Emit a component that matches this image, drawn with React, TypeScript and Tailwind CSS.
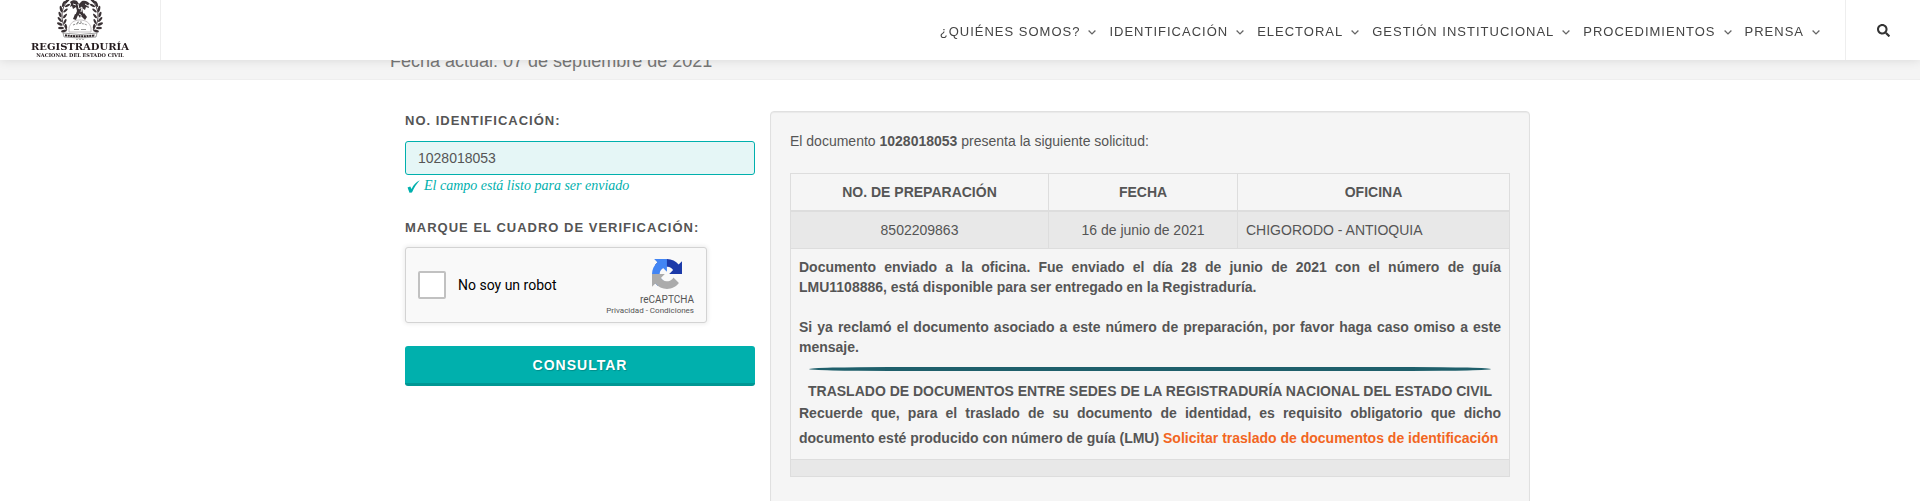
import React from "react";
import { FaSearch } from "react-icons/fa";

const menu = [
  "¿Quiénes somos?",
  "Identificación",
  "Electoral",
  "Gestión institucional",
  "Procedimientos",
  "Prensa",
];

function Chevron() {
  return (
    <svg width="8" height="5" viewBox="0 0 8 5" fill="none" stroke="#666" strokeWidth="1.3" aria-hidden="true">
      <path d="M0.6 0.5 4 3.9 7.4 0.5" />
    </svg>
  );
}

function Laurel() {
  return (
    <g>
      <path d="M12 0C7 4 5 10 5 15c0 6 1 10 5 15" fill="none" stroke="#4a4044" strokeWidth="1" />
      <g fill="#3a3235">
        <ellipse cx="10" cy="1" rx="3.4" ry="1.2" transform="rotate(-40 10 1)" />
        <ellipse cx="6.5" cy="4" rx="3.2" ry="1.2" transform="rotate(-70 6.5 4)" />
        <ellipse cx="10.500" cy="5.500" rx="2.800" ry="1.1" transform="rotate(-25 10.500 5.500)" />
        <ellipse cx="4" cy="9" rx="3.2" ry="1.2" transform="rotate(-100 4 9)" />
        <ellipse cx="8.500" cy="10.500" rx="2.800" ry="1.1" transform="rotate(-40 8.500 10.500)" />
        <ellipse cx="3" cy="14.500" rx="3" ry="1.2" transform="rotate(70 3 14.500)" />
        <ellipse cx="8" cy="16" rx="2.800" ry="1.1" transform="rotate(-50 8 16)" />
        <ellipse cx="2.800" cy="19.500" rx="3" ry="1.2" transform="rotate(50 2.800 19.500)" />
        <ellipse cx="8" cy="21.500" rx="2.800" ry="1.1" transform="rotate(-65 8 21.500)" />
        <ellipse cx="2.800" cy="24" rx="3" ry="1.3" transform="rotate(25 2.800 24)" />
        <ellipse cx="9" cy="26.500" rx="2.800" ry="1.1" transform="rotate(80 9 26.500)" />
        <ellipse cx="4" cy="28" rx="3" ry="1.3" transform="rotate(0 4 28)" />
        <ellipse cx="7" cy="31" rx="3" ry="1.2" transform="rotate(-15 7 31)" />
      </g>
    </g>
  );
}

function Emblem() {
  return (
    <svg width="46" height="41" viewBox="0 0 46 41" aria-hidden="true">
      <Laurel />
      <g transform="translate(46 0) scale(-1 1)">
        <Laurel />
      </g>
      <g fill="#3a3235">
        <path d="M13 2c2-2 5-2 7-1l2 3 3-3c4-1 6 1 8 3l-2 1 1 3-3-1-1 3-3-2 1 5 1 3-3-1-1 3-2-3-3 1 2-5-1-4-3 2-1-3-2 1 1-3z" />
        <path d="M18 14l3 1-2 5-3-1zM27 13l3 4-2 3-4-4z" />
      </g>
      <path d="M21 4l1 5 3-2-1 5M16 4l3 1M28 4l3 2M22 14l2 1" fill="none" stroke="#fff" strokeWidth="0.9" />
      <path d="M12 28c1-5 5-8 11-8s10 3 11 8v4H12z" fill="#fff" stroke="#b5b0b2" strokeWidth="0.8" />
      <path d="M16 25q7-3 14 0M20 22.500q3-1 6 0" fill="none" stroke="#888" strokeWidth="1" strokeDasharray="2 1" />
      <path d="M17 29.500h5M24 29.500h5" stroke="#999" strokeWidth="1" />
      <path d="M6 33q17 3 34 0l-1 4q-16 2-32 0z" fill="#fff" stroke="#777" strokeWidth="0.7" />
      <path d="M8 35.300q15 2 30 0" fill="none" stroke="#2b2326" strokeWidth="2" strokeDasharray="2 0.700" />
      <path d="M19 39.500h8" stroke="#bbb" strokeWidth="1" strokeDasharray="2 1" />
    </svg>
  );
}

function RecaptchaLogo() {
  return (
    <svg width="30" height="30" viewBox="0 0 64 64" aria-hidden="true">
      <path fill="#1c3aa9" d="M64 31.955l-.033-1.370V4.687l-7.160 7.160C50.948 4.674 42.033.093 32.050.093c-10.389 0-19.622 4.960-25.458 12.640l11.736 11.860a15.550 15.550 0 0 1 4.754-5.334c2.050-1.600 4.952-2.906 8.968-2.906.485 0 .860.057 1.135.163 4.976.393 9.288 3.140 11.828 7.124l-8.307 8.307L64 31.953" />
      <path fill="#4285f4" d="M31.862.094l-1.370.033H4.594l7.160 7.160C4.580 13.147 0 22.060 0 32.046c0 10.388 4.960 19.622 12.640 25.458L24.500 45.768a15.550 15.550 0 0 1-5.334-4.754c-1.600-2.050-2.906-4.952-2.906-8.968 0-.485.057-.860.163-1.135.393-4.976 3.140-9.288 7.124-11.828l8.307 8.307L31.860.095" />
      <path fill="#ababab" d="M.001 32.045l.033 1.370v25.898l7.160-7.160c5.860 7.173 14.774 11.754 24.760 11.754 10.388 0 19.622-4.960 25.458-12.640l-11.736-11.860a15.550 15.550 0 0 1-4.754 5.334c-2.050 1.600-4.952 2.906-8.968 2.906-.485 0-.860-.057-1.135-.163-4.976-.393-9.288-3.140-11.828-7.124l8.307-8.307c-10.522.040-22.400.066-27.295-.005" />
    </svg>
  );
}

function Header() {
  return (
    <header className="sticky top-0 z-10 flex h-[60px] bg-white shadow-[0_0_10px_rgba(0,0,0,0.12)]">
      <a href="#" className="flex w-[161px] flex-col items-center border-r border-[#eee] font-['DejaVu_Serif',serif] font-bold text-[#231a1d]">
        <Emblem />
        <span className="text-[10px] leading-[11px]">REGISTRADURÍA</span>
        <span className="text-[5px] leading-[6px] whitespace-nowrap">NACIONAL DEL ESTADO CIVIL</span>
      </a>
      <nav className="ml-auto flex items-center gap-[13px] pt-1 pr-[25px]">
        {menu.map((m) => (
          <a key={m} href="#" className="flex items-center gap-2 text-[13px] tracking-[1px] whitespace-nowrap text-[#444] uppercase">
            {m}
            <Chevron />
          </a>
        ))}
      </nav>
      <button type="button" aria-label="Buscar" className="flex w-[75px] items-center justify-center border-l border-[#eee] text-[#333]">
        <FaSearch size={13} />
      </button>
    </header>
  );
}

function QueryForm() {
  return (
    <form className="flex w-1/3 flex-col px-[15px]" onSubmit={(e) => e.preventDefault()}>
      <label htmlFor="doc" className="text-[13px] leading-5 font-bold tracking-[1px] uppercase">
        No. identificación:
      </label>
      <input
        id="doc"
        type="text"
        defaultValue="1028018053"
        className="mt-[10px] h-[34px] rounded-[3px] border border-[#00b0ad] bg-[#e5f6f6] px-3 text-sm text-[#555] outline-none"
      />
      <p className="flex items-center gap-1 pl-[2px] font-['Liberation_Serif',serif] text-sm leading-[22px] text-[#00b0ad] italic">
        <svg width="13" height="13" viewBox="0 0 12 12" aria-hidden="true">
          <path d="M0.500 7 3 6l1.200 2.200C6 4.500 8.500 2 11.800 0.300 9 3.500 6.500 7 4.600 11.500L2.300 11.800z" fill="#00b0ad" />
        </svg>
        El campo está listo para ser enviado
      </p>
      <p className="mt-[21px] text-[13px] leading-5 font-bold tracking-[1px] uppercase">Marque el cuadro de verificación:</p>
      <div className="mt-[9px] flex h-[76px] w-[302px] items-center rounded-[3px] border border-[#d3d3d3] bg-[#f9f9f9] px-3 font-[Roboto,sans-serif] shadow-[0_0_4px_1px_rgba(0,0,0,0.08)]">
        <input id="robot" type="checkbox" className="size-7 appearance-none rounded-[2px] border-2 border-[#c1c1c1] bg-white" />
        <label htmlFor="robot" className="ml-3 text-sm text-black">
          No soy un robot
        </label>
        <div className="ml-auto flex flex-col items-end pt-1 text-[#555]">
          <div className="flex flex-col items-center">
            <RecaptchaLogo />
            <span className="mt-1 text-[10px] leading-[13px]">reCAPTCHA</span>
          </div>
          <span className="text-[8px] leading-[10px]">
            <a href="#">Privacidad</a> - <a href="#">Condiciones</a>
          </span>
        </div>
      </div>
      <button
        type="submit"
        className="mt-[23px] h-10 rounded-[3px] border-b-[3px] border-[#009794] bg-[#00b0ad] text-sm font-bold tracking-[1px] text-white uppercase [text-shadow:1px_1px_1px_rgba(0,0,0,0.2)]"
      >
        Consultar
      </button>
    </form>
  );
}

function Result() {
  const cell = "border border-[#ddd] px-2 py-2 text-center";
  return (
    <section className="w-2/3 rounded-[4px] border border-[#e0e0e0] bg-[#f5f5f5] px-[19px] pt-[19px] pb-10 text-sm leading-5 shadow-[inset_0_1px_1px_rgba(0,0,0,0.05)]">
      <p>
        El documento <strong>1028018053</strong> presenta la siguiente solicitud:
      </p>
      <table className="mt-[22px] w-full table-fixed border-collapse border border-[#ddd]">
        <colgroup>
          <col className="w-[258px]" />
          <col className="w-[189px]" />
          <col />
        </colgroup>
        <thead>
          <tr className="border-b-2 border-[#ddd]">
            <th className={cell}>NO. DE PREPARACIÓN</th>
            <th className={cell}>FECHA</th>
            <th className={cell}>OFICINA</th>
          </tr>
        </thead>
        <tbody>
          <tr className="bg-[#e8e8e8]">
            <td className={cell}>8502209863</td>
            <td className={cell}>16 de junio de 2021</td>
            <td className="border border-[#ddd] p-2 text-left">CHIGORODO - ANTIOQUIA</td>
          </tr>
          <tr>
            <td colSpan={3} className="border border-[#ddd] p-2 font-bold">
              <p className="text-justify">
                Documento enviado a la oficina. Fue enviado el día 28 de junio de 2021 con el número de guía LMU1108886, está
                disponible para ser entregado en la Registraduría.
              </p>
              <p className="mt-5 text-justify">
                Si ya reclamó el documento asociado a este número de preparación, por favor haga caso omiso a este mensaje.
              </p>
              <hr className="mx-[10px] my-[10px] h-1 border-0 bg-[#1f5f6b] [border-radius:80px/2px]" />
              <p className="text-center">TRASLADO DE DOCUMENTOS ENTRE SEDES DE LA REGISTRADURÍA NACIONAL DEL ESTADO CIVIL</p>
              <p className="text-justify leading-[25px]">
                Recuerde que, para el traslado de su documento de identidad, es requisito obligatorio que dicho documento esté
                producido con número de guía (LMU){" "}
                <a href="#" className="text-[#f26522]">
                  Solicitar traslado de documentos de identificación
                </a>
              </p>
            </td>
          </tr>
          <tr className="bg-[#e8e8e8]">
            <td colSpan={3} className="border border-[#ddd] p-2" />
          </tr>
        </tbody>
      </table>
    </section>
  );
}

export default function App() {
  return (
    <div className="h-screen overflow-hidden bg-white font-['Liberation_Sans',Arial,sans-serif] text-[#555]">
      <Header />
      <div className="-mt-[13px] border-b border-[#eee] bg-[#f4f4f4] pb-1">
        <p className="mx-auto max-w-[1140px] text-lg text-[#777]">Fecha actual: 07 de septiembre de 2021</p>
      </div>
      <main className="mx-auto flex max-w-[1140px] items-start pt-[31px]">
        <QueryForm />
        <Result />
      </main>
    </div>
  );
}
